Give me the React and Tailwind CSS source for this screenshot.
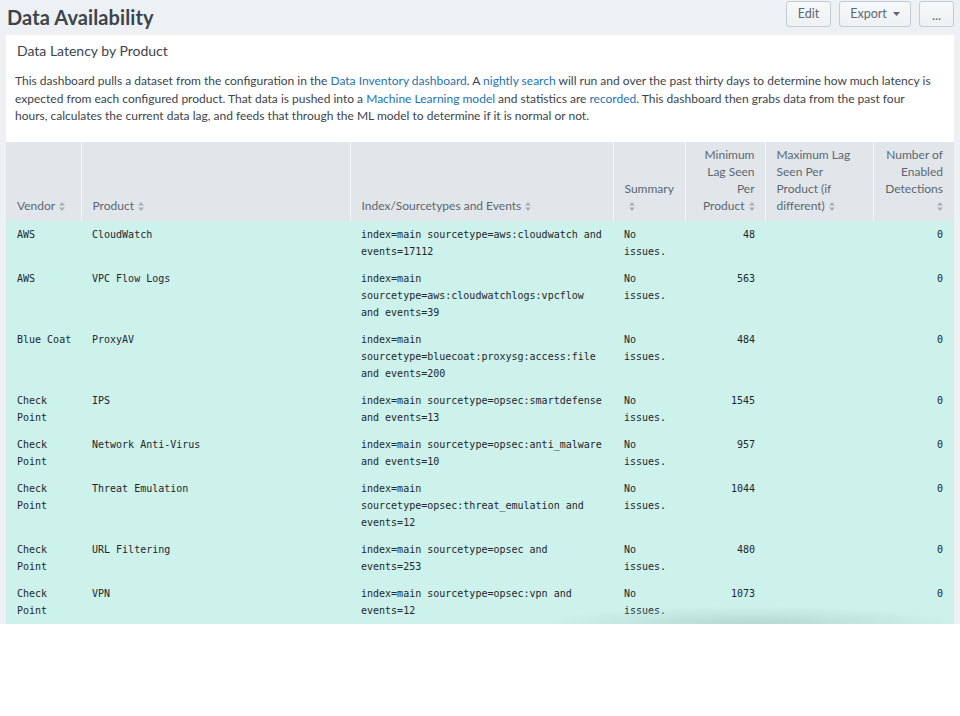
import React from "react";

const sans = { fontFamily: "Lato, 'Open Sans', sans-serif" };
const mono = { fontFamily: "'DejaVu Sans Mono', 'Liberation Mono', monospace" };

function SortIcon() {
  return (
    <svg width="6" height="9" viewBox="0 0 6 9" className="inline-block align-[-1px] ml-[4px]">
      <path d="M3 0 L6 3.4 H0 Z M0 5.6 H6 L3 9 Z" fill="#a7afb7" />
    </svg>
  );
}

const rows = [
  { v: ["AWS"], p: "CloudWatch", i: ["index=main sourcetype=aws:cloudwatch and", "events=17112"], min: "48" },
  { v: ["AWS"], p: "VPC Flow Logs", i: ["index=main", "sourcetype=aws:cloudwatchlogs:vpcflow", "and events=39"], min: "563" },
  { v: ["Blue Coat"], p: "ProxyAV", i: ["index=main", "sourcetype=bluecoat:proxysg:access:file", "and events=200"], min: "484" },
  { v: ["Check", "Point"], p: "IPS", i: ["index=main sourcetype=opsec:smartdefense", "and events=13"], min: "1545" },
  { v: ["Check", "Point"], p: "Network Anti-Virus", i: ["index=main sourcetype=opsec:anti_malware", "and events=10"], min: "957" },
  { v: ["Check", "Point"], p: "Threat Emulation", i: ["index=main", "sourcetype=opsec:threat_emulation and", "events=12"], min: "1044" },
  { v: ["Check", "Point"], p: "URL Filtering", i: ["index=main sourcetype=opsec and", "events=253"], min: "480" },
  { v: ["Check", "Point"], p: "VPN", i: ["index=main sourcetype=opsec:vpn and", "events=12"], min: "1073" },
];

function Lines({ lines }) {
  return lines.map((l, k) => (
    <React.Fragment key={k}>
      {k > 0 && <br />}
      {l}
    </React.Fragment>
  ));
}

function Btn({ children, w }) {
  return (
    <button
      className={`${w} h-[26px] rounded-[3px] border border-[#c3cbd4] bg-gradient-to-b from-[#f7f8fa] to-[#eef1f3] text-[12.5px] text-[#5c6773] flex items-center justify-center`}
      style={sans}
    >
      {children}
    </button>
  );
}

export default function App() {
  const th = "align-bottom pl-[11px] pr-[10px] pt-[4px] pb-[7px] font-normal text-[12px] leading-[17px] text-[#5c6773] whitespace-nowrap";
  const td = "align-top pl-[11px] pr-[10px] pt-[5px] pb-[5px] text-[10px] leading-[17px] text-[#23272b] whitespace-nowrap";
  const link = "text-[#1e72b5]";
  return (
    <div className="h-[716px] w-[960px] bg-white" style={sans}>
      <div className="relative h-[624px] overflow-hidden bg-[#eef1f3] px-[6px]">
        <div className="flex h-[35px] items-start justify-between">
          <h1 className="pl-px pt-[5px] text-[20px] font-bold leading-6 text-[#3c444d] tracking-[0.1px]">Data Availability</h1>
          <div className="flex gap-2 pt-px">
            <Btn w="w-[45px]">Edit</Btn>
            <Btn w="w-[72px]">
              Export
              <svg width="7" height="4" viewBox="0 0 7 4" className="ml-[6px]">
                <path d="M0 0 H7 L3.5 4 Z" fill="#5c6773" />
              </svg>
            </Btn>
            <Btn w="w-[35px]">
              <span className="leading-none pt-[4px]">...</span>
            </Btn>
          </div>
        </div>
        <div className="bg-white">
          <div className="px-[11px] pt-[7px] text-[14px] leading-[18px] text-[#3c444d]">Data Latency by Product</div>
          <p className="mt-[12px] px-[9px] text-[12px] leading-[17.5px] text-[#3c444d] whitespace-nowrap">
            This dashboard pulls a dataset from the configuration in the{" "}
            <span className={link}>Data Inventory dashboard</span>. A{" "}
            <span className={link}>nightly search</span> will run and over the past thirty days to determine how much latency is
            <br />
            expected from each configured product. That data is pushed into a{" "}
            <span className={link}>Machine Learning model</span> and statistics are{" "}
            <span className={link}>recorded</span>. This dashboard then grabs data from the past four
            <br />
            hours, calculates the current data lag, and feeds that through the ML model to determine if it is normal or not.
          </p>
          <table className="mt-[17px] w-full table-fixed border-collapse">
            <colgroup>
              <col className="w-[75px]" />
              <col className="w-[269px]" />
              <col className="w-[263px]" />
              <col className="w-[72px]" />
              <col className="w-[80px]" />
              <col className="w-[108px]" />
              <col className="w-[81px]" />
            </colgroup>
            <thead>
              <tr className="bg-[#e1e6ea] text-left">
                <th className={th}>Vendor<SortIcon /></th>
                <th className={`${th} border-l border-[#f4f6f8]`}>Product<SortIcon /></th>
                <th className={`${th} border-l border-[#f4f6f8]`}>Index/Sourcetypes and Events<SortIcon /></th>
                <th className={`${th} border-l border-[#f4f6f8]`}>Summary<br /><SortIcon /></th>
                <th className={`${th} border-l border-[#f4f6f8] text-right`}>Minimum<br />Lag Seen<br />Per<br />Product<SortIcon /></th>
                <th className={`${th} border-l border-[#f4f6f8]`}>Maximum Lag<br />Seen Per<br />Product (if<br />different)<SortIcon /></th>
                <th className={`${th} border-l border-[#f4f6f8] text-right pr-[11px]`}>Number of<br />Enabled<br />Detections<br /><SortIcon /></th>
              </tr>
            </thead>
            <tbody style={mono} className="bg-[#cdf1eb]">
              {rows.map((r, k) => (
                <tr key={k}>
                  <td className={td}><Lines lines={r.v} /></td>
                  <td className={td}>{r.p}</td>
                  <td className={td}><Lines lines={r.i} /></td>
                  <td className={td}>No<br />issues.</td>
                  <td className={`${td} text-right`}>{r.min}</td>
                  <td className={td}></td>
                  <td className={`${td} text-right pr-[11px]`}>0</td>
                </tr>
              ))}
            </tbody>
          </table>
        </div>
        <div className="pointer-events-none absolute bottom-0 left-[540px] h-[18px] w-[420px] bg-[radial-gradient(ellipse_at_bottom,#b5d9d2_0%,rgba(205,241,235,0)_70%)]" />
      </div>
    </div>
  );
}
